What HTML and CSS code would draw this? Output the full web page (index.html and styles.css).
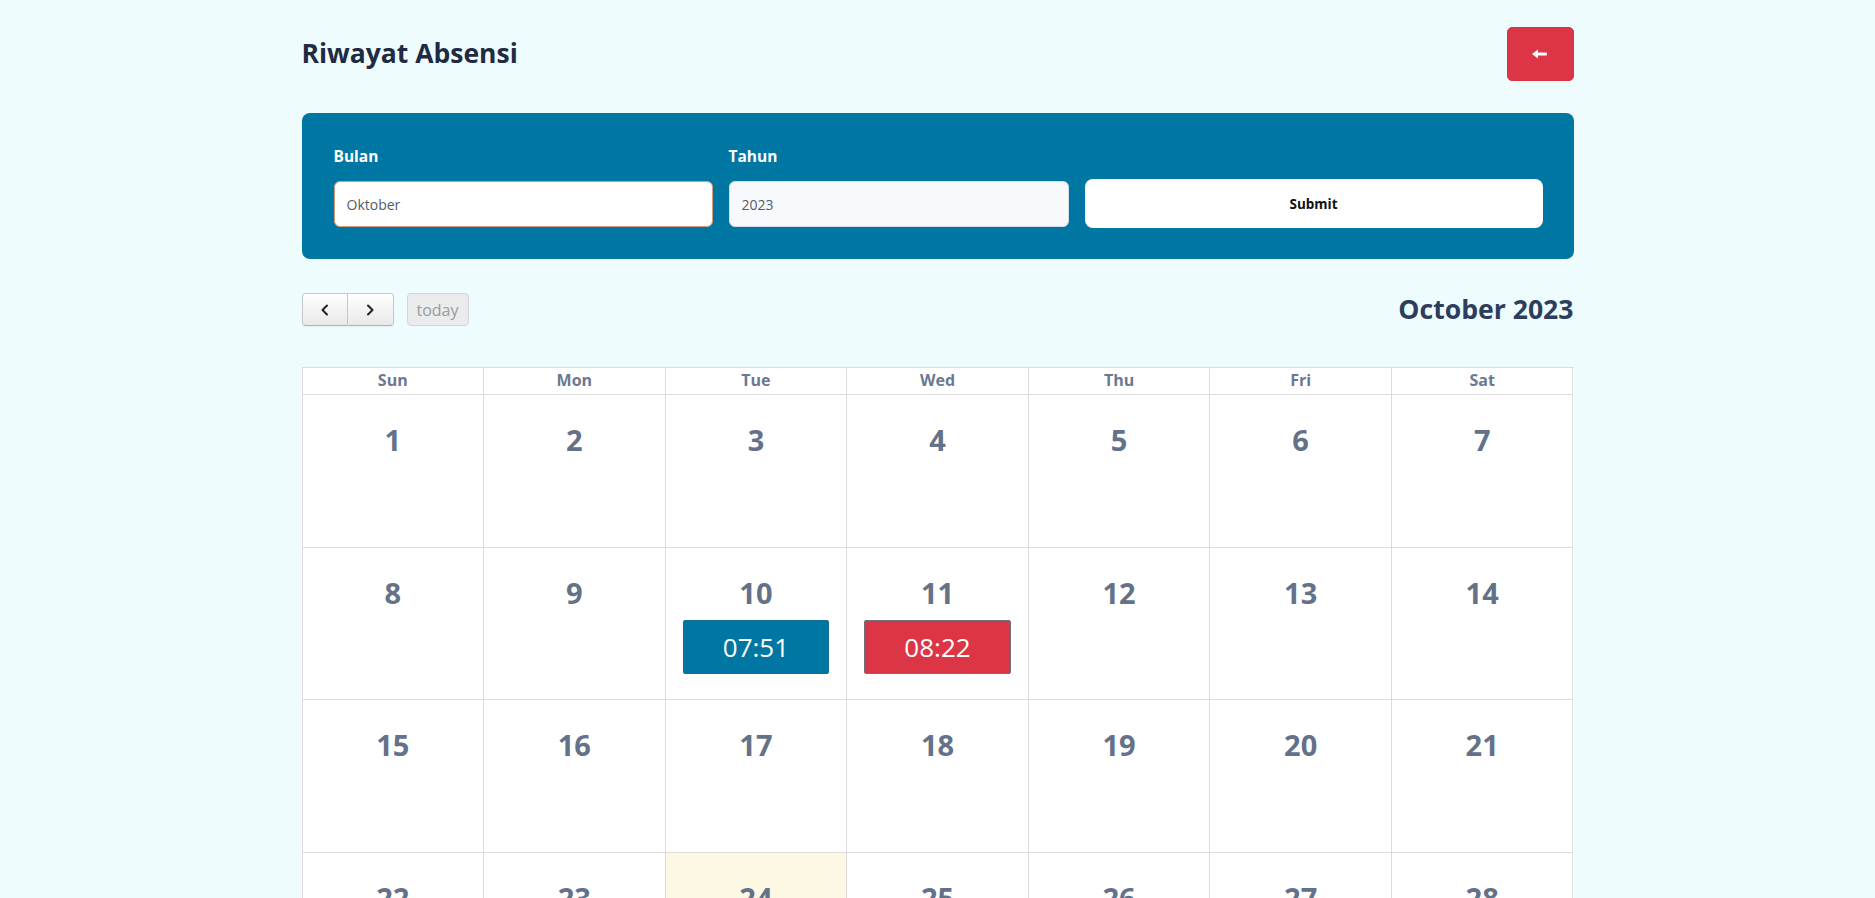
FILE: index.html
```html
<!DOCTYPE html>
<html lang="id">
<head>
<meta charset="utf-8">
<title>Riwayat Absensi</title>
<link rel="stylesheet" href="styles.css">
</head>
<body>
<div class="container">
  <header class="page-head">
    <h1 class="page-title">Riwayat Absensi</h1>
    <button class="btn-back" type="button" aria-label="Kembali">
      <svg width="16" height="12" viewBox="0 0 16 12"><polygon points="0,6 6,1.5 6,10.5" fill="#fff"/><rect x="5" y="4.5" width="10" height="3" rx="1" fill="#fff"/></svg>
    </button>
  </header>

  <form class="filter-panel">
    <div class="field">
      <label class="field-label">Bulan</label>
      <div class="input input-focus">Oktober</div>
    </div>
    <div class="field">
      <label class="field-label">Tahun</label>
      <div class="input input-readonly">2023</div>
    </div>
    <div class="field field-submit">
      <button class="btn-submit" type="button">Submit</button>
    </div>
  </form>

  <div class="cal-toolbar">
    <div class="cal-left">
      <div class="btn-group">
        <button class="cal-btn" type="button" aria-label="prev">
          <svg width="12" height="14" viewBox="0 0 12 14"><path d="M8 2.5L3.5 7L8 11.5" fill="none" stroke="#222" stroke-width="2" stroke-linecap="round" stroke-linejoin="round"/></svg>
        </button>
        <button class="cal-btn" type="button" aria-label="next">
          <svg width="12" height="14" viewBox="0 0 12 14"><path d="M4 2.5L8.5 7L4 11.5" fill="none" stroke="#222" stroke-width="2" stroke-linecap="round" stroke-linejoin="round"/></svg>
        </button>
      </div>
      <button class="cal-btn cal-today" type="button">today</button>
    </div>
    <h2 class="cal-title">October 2023</h2>
  </div>

  <div class="calendar">
    <div class="cal-head">Sun</div>
    <div class="cal-head">Mon</div>
    <div class="cal-head">Tue</div>
    <div class="cal-head">Wed</div>
    <div class="cal-head">Thu</div>
    <div class="cal-head">Fri</div>
    <div class="cal-head">Sat</div>

    <div class="cal-day"><span class="day-num">1</span></div>
    <div class="cal-day"><span class="day-num">2</span></div>
    <div class="cal-day"><span class="day-num">3</span></div>
    <div class="cal-day"><span class="day-num">4</span></div>
    <div class="cal-day"><span class="day-num">5</span></div>
    <div class="cal-day"><span class="day-num">6</span></div>
    <div class="cal-day"><span class="day-num">7</span></div>

    <div class="cal-day"><span class="day-num">8</span></div>
    <div class="cal-day"><span class="day-num">9</span></div>
    <div class="cal-day"><span class="day-num">10</span><div class="event event-ontime">07:51</div></div>
    <div class="cal-day"><span class="day-num">11</span><div class="event event-late">08:22</div></div>
    <div class="cal-day"><span class="day-num">12</span></div>
    <div class="cal-day"><span class="day-num">13</span></div>
    <div class="cal-day"><span class="day-num">14</span></div>

    <div class="cal-day"><span class="day-num">15</span></div>
    <div class="cal-day"><span class="day-num">16</span></div>
    <div class="cal-day"><span class="day-num">17</span></div>
    <div class="cal-day"><span class="day-num">18</span></div>
    <div class="cal-day"><span class="day-num">19</span></div>
    <div class="cal-day"><span class="day-num">20</span></div>
    <div class="cal-day"><span class="day-num">21</span></div>

    <div class="cal-day"><span class="day-num">22</span></div>
    <div class="cal-day"><span class="day-num">23</span></div>
    <div class="cal-day cal-today-cell"><span class="day-num">24</span></div>
    <div class="cal-day"><span class="day-num">25</span></div>
    <div class="cal-day"><span class="day-num">26</span></div>
    <div class="cal-day"><span class="day-num">27</span></div>
    <div class="cal-day"><span class="day-num">28</span></div>

    <div class="cal-day"><span class="day-num">29</span></div>
    <div class="cal-day"><span class="day-num">30</span></div>
    <div class="cal-day"><span class="day-num">31</span></div>
    <div class="cal-day cal-other"><span class="day-num">1</span></div>
    <div class="cal-day cal-other"><span class="day-num">2</span></div>
    <div class="cal-day cal-other"><span class="day-num">3</span></div>
    <div class="cal-day cal-other"><span class="day-num">4</span></div>
  </div>
</div>
</body>
</html>
```

FILE: styles.css
```css
* { box-sizing: border-box; }

html, body {
  margin: 0;
  padding: 0;
}

body {
  background: #effcfe;
  font-family: "Open Sans", "Noto Sans", "Liberation Sans", sans-serif;
  color: #1f2a44;
}

.container {
  width: 1272px;
  margin: 0 auto;
  padding-bottom: 40px;
}

.page-head {
  display: flex;
  justify-content: space-between;
  align-items: center;
  padding-top: 27px;
}

.page-title {
  margin: 0;
  font-size: 26.5px;
  font-weight: 700;
  color: #1f2a44;
  line-height: 1.2;
}

.btn-back {
  width: 67px;
  height: 54px;
  border: 1px solid #d93341;
  border-radius: 5px;
  background: #dc3545;
  display: flex;
  align-items: center;
  justify-content: center;
  padding: 0;
  cursor: pointer;
}

.filter-panel {
  margin: 32px 0 0;
  background: #0077a3;
  border-radius: 8px;
  padding: 32px 31px 31px 32px;
  display: grid;
  grid-template-columns: 379px 340px 1fr;
  column-gap: 16px;
  align-items: end;
}

.field {
  display: flex;
  flex-direction: column;
}

.field-label {
  font-size: 15.5px;
  font-weight: 700;
  color: #ffffff;
  line-height: 22px;
  margin-bottom: 14px;
}

.input {
  height: 46px;
  border-radius: 6px;
  font-size: 14px;
  color: #555b66;
  padding: 0 12px;
  display: flex;
  align-items: center;
  margin-bottom: 1px;
}

.input-focus {
  background: #ffffff;
  border: 1px solid #d8997d;
}

.input-readonly {
  background: #f7f9fd;
  border: 1px solid #d5dce6;
}

.btn-submit {
  height: 49px;
  width: 100%;
  background: #ffffff;
  border: none;
  border-radius: 8px;
  font-family: inherit;
  font-size: 13.5px;
  font-weight: 700;
  color: #111;
  cursor: pointer;
}

.cal-toolbar {
  display: flex;
  justify-content: space-between;
  align-items: center;
  margin-top: 32px;
}

.cal-left {
  display: flex;
  align-items: center;
  gap: 13px;
}

.btn-group {
  display: flex;
}

.cal-btn {
  height: 33px;
  border: 1px solid #c9c9c9;
  border-bottom-color: #b3b3b3;
  background: linear-gradient(#ffffff, #e8e8e8);
  box-shadow: inset 0 1px 0 rgba(255,255,255,.3), 0 1px 2px rgba(0,0,0,.06);
  padding: 0;
  display: flex;
  align-items: center;
  justify-content: center;
  font-family: inherit;
  cursor: pointer;
}

.btn-group .cal-btn {
  width: 46px;
}

.btn-group .cal-btn:first-child {
  border-radius: 4px 0 0 4px;
}

.btn-group .cal-btn:last-child {
  border-radius: 0 4px 4px 0;
  border-left: none;
}

.cal-today {
  width: 62px;
  border-radius: 4px;
  background: #e9ebec;
  border-color: #d3d5d6;
  box-shadow: none;
  font-size: 16px;
  color: #9a9c9e;
}

.cal-title {
  margin: 0;
  font-size: 26.6px;
  font-weight: 700;
  color: #2c3d5e;
  line-height: 1.4;
}

.calendar {
  margin-top: 39px;
  display: grid;
  grid-template-columns: repeat(7, 1fr);
  grid-auto-rows: 152.6px;
  grid-template-rows: 27px;
  border-top: 1px solid #dcdcdc;
  border-left: 1px solid #dcdcdc;
  background: #ffffff;
}

.cal-head {
  border-right: 1px solid #dcdcdc;
  border-bottom: 1px solid #dcdcdc;
  text-align: center;
  font-size: 16px;
  font-weight: 700;
  color: #6b7892;
  line-height: 24px;
}

.cal-day {
  border-right: 1px solid #dcdcdc;
  border-bottom: 1px solid #dcdcdc;
  display: flex;
  flex-direction: column;
  align-items: center;
  padding: 24px 17px 0;
}

.cal-today-cell {
  background: #fcf8e3;
}

.day-num {
  font-size: 29px;
  font-weight: 700;
  color: #637189;
  line-height: 42px;
}

.cal-other .day-num {
  opacity: .4;
}

.event {
  margin-top: 6px;
  width: 100%;
  height: 54px;
  display: flex;
  align-items: center;
  justify-content: center;
  font-size: 26px;
  color: #ffffff;
  border-radius: 2px;
}

.event-ontime {
  background: #0077a3;
  border: 1px solid #136f93;
}

.event-late {
  background: #dc3545;
  border: 1px solid #6b6f7e;
}
```
